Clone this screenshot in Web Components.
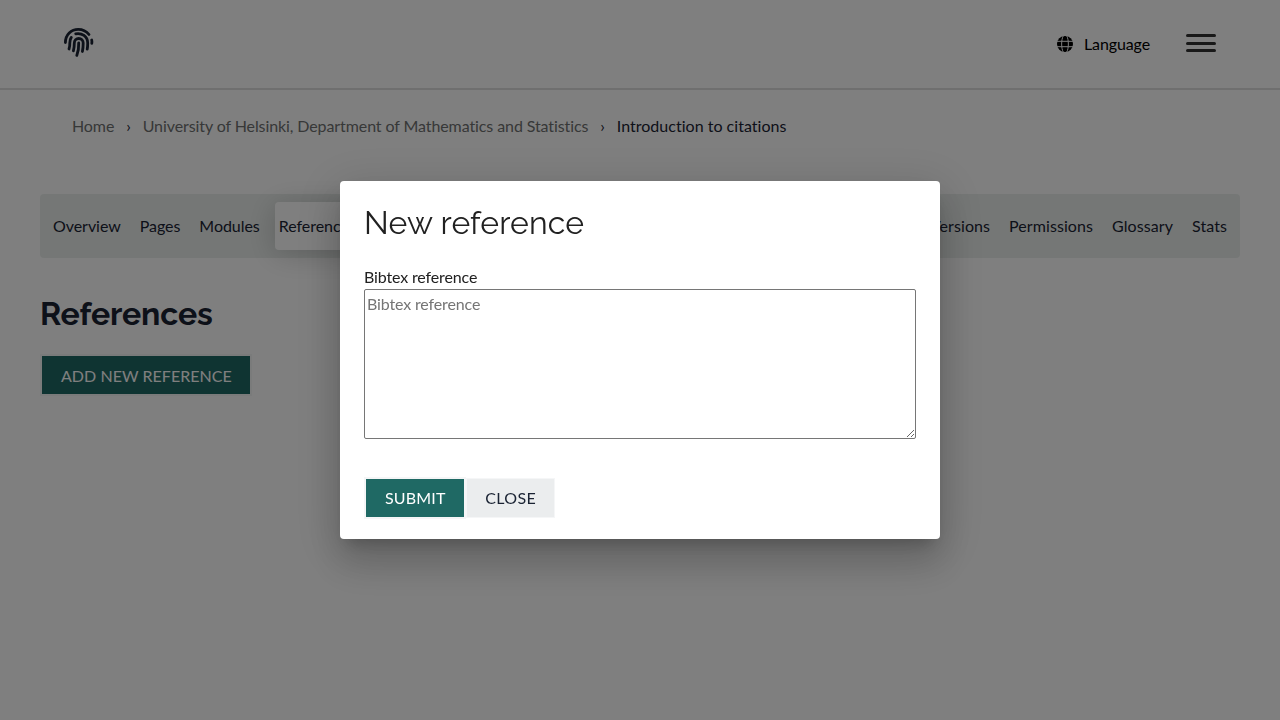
<!DOCTYPE html>
<html lang="en">
<head>
<meta charset="utf-8">
<title>References</title>
<style>
html,body{margin:0;height:100%;overflow:hidden;background:#fff}
body{font:16px/24px Lato,"Open Sans",sans-serif;letter-spacing:-.11px;font-variant-ligatures:none;color:#1a2333}
</style>
</head>
<body>
<course-page></course-page>
<reference-dialog></reference-dialog>
<script>
const define = (name, html) => customElements.define(name, class extends HTMLElement {
  constructor() {
    super();
    const t = document.createElement('template');
    t.innerHTML = html;
    this.attachShadow({ mode: 'open' }).append(t.content.cloneNode(true));
  }
});

define('finger-logo', `
<style>:host{display:block;width:30px;height:30px}svg{display:block;overflow:visible}</style>
<svg width="30" height="30" viewBox="0 0 30 30" fill="none" stroke="#1a2333" stroke-width="2.8" stroke-linecap="round">
<path d="M1.4 14.6C1.4 6.8 7.3 1.3 14.2 1.3c4.6 0 8.2 1.9 10.8 5.2"/>
<path d="M27.7 12c.3 1.200.3 2.100.1 3.400"/>
<path d="M11.700 5.800c6-1.300 12 2.700 12 9.200 0 2.200-.1 4.200-.5 6.200"/>
<path d="M7.300 9.400c-1.200 1.700-1.600 3.400-1.500 5.600.1 2.200-.2 4.100-.8 6"/>
<path d="M9.400 22.900c.7-2.700.9-4.800.9-7.700 0-2.800 2-4.700 4.400-4.700 2.600 0 4.500 1.900 4.500 4.600 0 3.200-.2 5.700-.8 8.400"/>
<path d="M14.700 15c.2 5-.5 8.800-1.900 12.400"/>
</svg>`);

define('language-button', `
<style>:host{display:flex;align-items:center;gap:11px;color:#000}svg{display:block}</style>
<svg width="16" height="16" viewBox="0 0 16 16"><circle cx="8" cy="8" r="8" fill="#000"/>
<g fill="none" stroke="#fff" stroke-width="1"><path d="M0 5.300h16M0 10.700h16"/><path d="M6.300-.2C4.100 3.500 4.100 12.500 6.300 16.200M9.700-.2c2.200 3.700 2.200 12.700 0 16.400"/></g></svg>
<span><slot></slot></span>`);

define('menu-toggle', `
<style>:host{display:flex;flex-direction:column;justify-content:space-between;width:30px;height:18px}i{height:3px;border-radius:1.500px;background:#333}</style>
<i></i><i></i><i></i>`);

define('site-header', `
<style>:host{display:flex;box-sizing:border-box;height:90px;padding:28px 64px 0;border-bottom:2px solid #dedfdf;justify-content:space-between;align-items:flex-start}
div{display:flex;align-items:flex-start;gap:36px}language-button{margin-top:4px}menu-toggle{margin-top:6px}</style>
<finger-logo></finger-logo><div><language-button>Language</language-button><menu-toggle></menu-toggle></div>`);

define('bread-crumbs', `
<style>:host{display:flex;gap:12px;padding:24px 72px 0;height:24px;color:#1a2333}a{color:#6e7070;letter-spacing:-.095px}.current{letter-spacing:.02px}</style>
<a>Home</a><span>›</span><a>University of Helsinki, Department of Mathematics and Statistics</a><span>›</span><span class="current">Introduction to citations</span>`);

define('nav-tab', `
<style>:host{display:flex;align-items:center;height:48px;padding:0 4px;border-radius:4px;white-space:nowrap}
:host([active]){background:#fff;box-shadow:0 4px 30px rgba(0,0,0,.2)}</style><slot></slot>`);

define('tab-bar', `
<style>:host{display:flex;gap:11px;padding:8px 9px;background:#ebefed;border-radius:4px;letter-spacing:-.05px}.end{margin-left:auto}.end,.end~nav-tab{letter-spacing:.08px}</style>
<nav-tab>Overview</nav-tab><nav-tab>Pages</nav-tab><nav-tab>Modules</nav-tab><nav-tab active>References</nav-tab>
<nav-tab class="end">Versions</nav-tab><nav-tab>Permissions</nav-tab><nav-tab>Glossary</nav-tab><nav-tab>Stats</nav-tab>`);

define('action-button', `
<style>:host{display:inline-flex}button{margin:0;font:16px/19px Lato,sans-serif;letter-spacing:var(--button-spacing,.04px);font-variant-ligatures:none;text-transform:uppercase;padding:var(--button-padding,10px 18.500px 9px 19px);border:0;outline:2px solid #f5f6f7;background:#1f6964;color:#fff}
:host([secondary]) button{background:#ebedee;color:#1a2333;outline-width:1px;letter-spacing:.3px;padding-left:18.300px;padding-right:18.300px}</style><button><slot></slot></button>`);

define('course-page', `
<style>:host{display:block;height:720px}main{padding:56px 40px 0}
h1{font:700 32px/40px Raleway,Lato,sans-serif;margin:36px 0 22px;letter-spacing:-.15px}action-button{margin-left:2px}</style>
<site-header></site-header><bread-crumbs></bread-crumbs>
<main><tab-bar></tab-bar><h1>References</h1><action-button>Add new reference</action-button></main>`);

define('reference-dialog', `
<style>:host{position:fixed;inset:0;display:flex;align-items:center;justify-content:center;background:rgba(0,0,0,.5)}
section{box-sizing:border-box;width:600px;height:358px;padding:22px 24px;border-radius:4px;background:#fff;color:#212121;box-shadow:0 11px 15px -7px rgba(0,0,0,.2),0 24px 38px 3px rgba(0,0,0,.14),0 9px 46px 8px rgba(0,0,0,.12)}
h2{margin:0;font:400 32px/40px Raleway,Lato,sans-serif;letter-spacing:.12px}
label{display:block;margin-top:22px;letter-spacing:-.14px}
textarea{display:block;box-sizing:border-box;width:552px;height:150px;margin:0;padding:2px;border:1px solid #767676;border-radius:2px;font:16px/24px Lato,sans-serif;letter-spacing:-.14px;font-variant-ligatures:none}
footer{display:flex;gap:3px;margin-top:40px;padding-left:2px;--button-spacing:.16px;--button-padding:9px 18.500px 10px 19px}</style>
<section><h2>New reference</h2><label>Bibtex reference</label><textarea placeholder="Bibtex reference"></textarea>
<footer><action-button>Submit</action-button><action-button secondary>Close</action-button></footer></section>`);
</script>
</body>
</html>
